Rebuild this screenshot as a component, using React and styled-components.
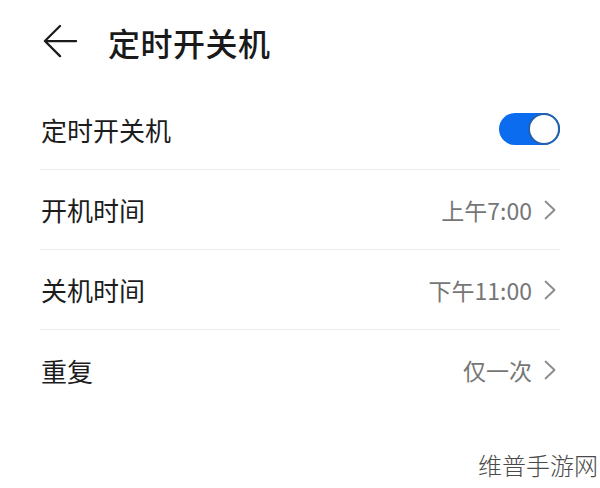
import styled, { createGlobalStyle } from 'styled-components';

const GlobalStyle = createGlobalStyle`
  html, body {
    margin: 0;
    background: #fff;
  }
  body {
    font-family: 'Noto Sans CJK SC', 'Noto Sans', sans-serif;
  }
`;

const rows = [
  { label: '开机时间', value: '上午7:00' },
  { label: '关机时间', value: '下午11:00' },
  { label: '重复', value: '仅一次' }
];

const App = () => {
  return (
    <Page>
      <GlobalStyle />
      <Header>
        <BackButton aria-label="返回">
          <svg width="36" height="36" viewBox="0 0 36 36" fill="none">
            <path d="M35 17H2M18 1L2 17l16 16" stroke="#1b1b1b" strokeWidth="2.4" strokeLinecap="round" strokeLinejoin="round" />
          </svg>
        </BackButton>
        <Title>定时开关机</Title>
      </Header>
      <List>
        <Row>
          <Label>定时开关机</Label>
          <Switch $on>
            <Knob />
          </Switch>
        </Row>
        {rows.map((row) => (
          <Row key={row.label}>
            <Label>{row.label}</Label>
            <Value>
              {row.value}
              <svg width="12" height="20" viewBox="0 0 12 20" fill="none">
                <path d="M1.5 1.5L10.5 10L1.5 18.5" stroke="#8a8a8a" strokeWidth="1.8" strokeLinecap="round" strokeLinejoin="round" />
              </svg>
            </Value>
          </Row>
        ))}
      </List>
      <Watermark>维普手游网</Watermark>
    </Page>
  );
};

export default App;

const Page = styled.div`
  position: relative;
  width: 600px;
  height: 488px;
  overflow: hidden;
  background: #fff;
  padding: 0 40px;
  box-sizing: border-box;
`;

const Header = styled.div`
  display: flex;
  align-items: center;
  height: 90px;
  gap: 31px;
  padding-left: 3px;
  padding-bottom: 6px;
  box-sizing: border-box;
`;

const BackButton = styled.div`
  display: flex;
  width: 34px;
  height: 36px;
  align-items: center;
`;

const Title = styled.h1`
  margin: 0;
  font-size: 32px;
  font-weight: 500;
  color: #1a1a1a;
  letter-spacing: 0.5px;
`;

const List = styled.div`
  display: flex;
  flex-direction: column;
`;

const Row = styled.div`
  display: flex;
  align-items: center;
  justify-content: space-between;
  height: 80px;
  box-sizing: border-box;
  border-bottom: 1px solid #ebebeb;

  &:last-child {
    border-bottom: none;
  }
`;

const Label = styled.span`
  font-size: 26px;
  color: #1c1c1c;
  padding-left: 1px;
`;

const Value = styled.span`
  display: flex;
  align-items: center;
  gap: 12px;
  padding-right: 4px;
  font-size: 23px;
  color: #767676;
`;

const Switch = styled.div`
  display: flex;
  align-items: center;
  justify-content: ${(p) => (p.$on ? 'flex-end' : 'flex-start')};
  width: 61px;
  height: 32px;
  border-radius: 16px;
  background: ${(p) => (p.$on ? '#0b6cf0' : '#d6d6d6')};
  margin-top: -2px;
`;

const Knob = styled.div`
  width: 32px;
  height: 32px;
  border-radius: 50%;
  background: #fff;
  border: 2.5px solid #2361ad;
  box-sizing: border-box;
`;

const Watermark = styled.div`
  position: absolute;
  right: 2px;
  bottom: 6px;
  font-size: 24px;
  font-weight: 300;
  color: #4a4a4a;
`;
